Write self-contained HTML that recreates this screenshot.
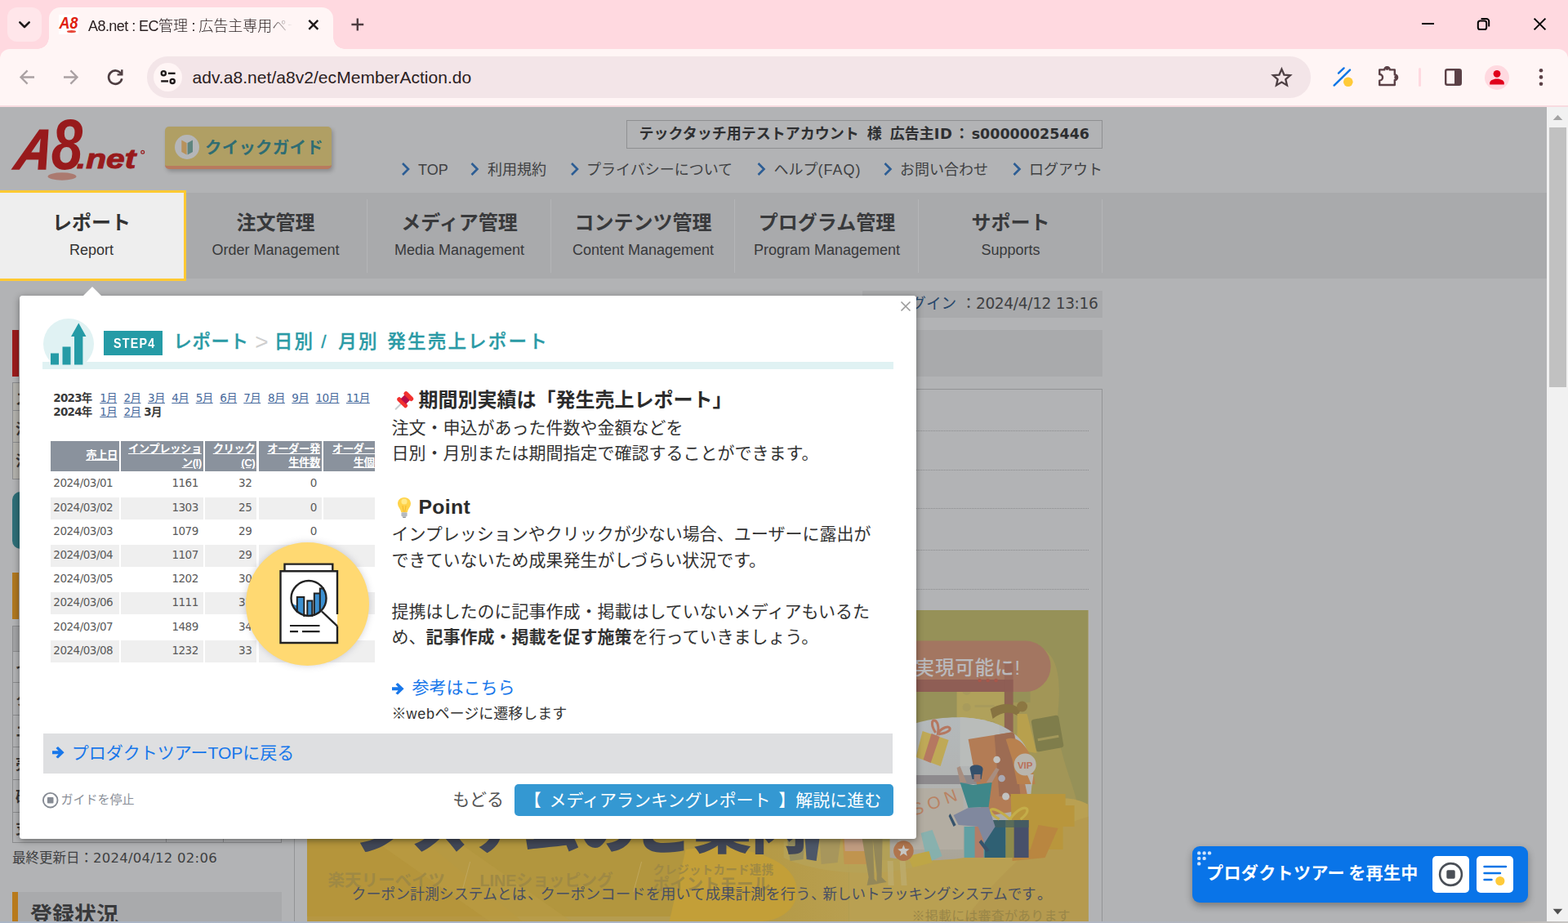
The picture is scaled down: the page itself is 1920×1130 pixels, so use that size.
<!DOCTYPE html>
<html lang="ja">
<head>
<meta charset="utf-8">
<title>A8.net : EC管理 : 広告主専用ページ</title>
<style>
*{box-sizing:border-box;margin:0;padding:0}
html,body{width:1920px;height:1130px;overflow:hidden;background:#b2b3b5}
body{position:relative;font-family:"Liberation Sans","Noto Sans CJK JP",sans-serif;color:#333;-webkit-font-smoothing:antialiased}
.abs{position:absolute}
.jp{font-family:"Liberation Sans","Noto Sans CJK JP",sans-serif}
/* ---------- browser chrome ---------- */
#chrome{position:absolute;left:0;top:0;width:1920px;height:131px;background:#ffd9e0;overflow:hidden;z-index:100}
#tabsearch{position:absolute;left:9px;top:9px;width:42px;height:42px;border-radius:12px;background:#ffe6ea}
#tab{position:absolute;left:60px;top:9px;width:348px;height:52px;border-radius:14px 14px 0 0;background:#fff5f5}
#tab:before,#tab:after{content:"";position:absolute;bottom:1px;width:14px;height:14px;background:radial-gradient(circle at 0 0,rgba(255,245,245,0) 13.5px,#fff5f5 14px)}
#tab:before{left:-14px}
#tab:after{right:-14px;background:radial-gradient(circle at 100% 0,rgba(255,245,245,0) 13.5px,#fff5f5 14px)}
#tabtitle{position:absolute;left:108px;top:19px;width:250px;height:26px;font-size:18px;line-height:26px;color:#2a2021;font-weight:300;letter-spacing:0;white-space:nowrap;overflow:hidden;font-family:"Liberation Sans","Noto Sans CJK JP",sans-serif;-webkit-mask-image:linear-gradient(90deg,#000 220px,transparent 250px);mask-image:linear-gradient(90deg,#000 220px,transparent 250px)}
#toolbar{position:absolute;left:0;top:60px;width:1920px;height:69px;background:#fff5f5;border-radius:12px 12px 0 0}
#omni{position:absolute;left:180px;top:9px;width:1425px;height:50.5px;border-radius:25.25px;background:#f3e5e8}
#sitebtn{position:absolute;left:8px;top:8px;width:35px;height:35px;border-radius:18px;background:#fff5f5}
#url{position:absolute;left:55.5px;top:10.8px;font-size:21px;line-height:30px;color:#2a2021;white-space:nowrap;font-family:"Liberation Sans",sans-serif;letter-spacing:.04px}
#chromeline{position:absolute;left:0;top:129px;width:1920px;height:2px;background:#f8dbe0}
/* ---------- page ---------- */
#page{position:absolute;left:0;top:130px;width:1895px;height:1000px;background:#b2b3b5;overflow:hidden}
#sb{position:absolute;left:1894px;top:130px;width:26px;height:1000px;background:#f1f1f1}
#sbthumb{position:absolute;left:3.4px;top:26px;width:20.2px;height:317.5px;background:#c1c1c1}

/* ---------- page header ---------- */
.dim{color:#3c3d3f}
#logo{position:absolute;left:0;top:0}
#qg{position:absolute;left:202px;top:24.5px;width:204px;height:52.5px;border-radius:5px;background:#b09f64;border-bottom:4px solid #b87a5e;box-shadow:2px 3px 5px rgba(0,0,0,.22)}
#qg .ic{position:absolute;left:12px;top:10px;width:30px;height:30px;border-radius:50%;background:#b5b6b8}
#qg .tx{position:absolute;left:49px;top:11.6px;font-family:"Liberation Sans","Noto Sans CJK JP",sans-serif;font-weight:bold;font-size:20.5px;line-height:30px;color:#2f6d73;white-space:nowrap;letter-spacing:.2px}
#acct{position:absolute;left:767px;top:17px;width:583px;height:35px;border:1px solid #8f9092;white-space:nowrap;font-weight:bold;font-size:18px;line-height:31.6px;color:#2e2f31;padding-left:14.5px;font-family:"DejaVu Sans","Noto Sans CJK JP",sans-serif}
#acct .j{font-family:"Liberation Sans","Noto Sans CJK JP",sans-serif}
.hl{position:absolute;top:63.6px;font-size:18px;line-height:28px;color:#404143;white-space:nowrap;font-family:"Liberation Sans","Noto Sans CJK JP",sans-serif}
/* nav */
#nav{position:absolute;left:0;top:106px;width:1895px;height:105px;background:#a9aaac}
.ni{position:absolute;top:0;width:225px;height:105px;text-align:center;color:#38393b}
.ni b{display:block;position:absolute;left:0;right:0;top:18.6px;font-size:24px;line-height:36px;font-family:"Liberation Sans","Noto Sans CJK JP",sans-serif;font-weight:bold;white-space:nowrap}
.ni span{display:block;position:absolute;left:-20px;right:-20px;top:57px;font-size:18px;line-height:26px;white-space:nowrap;font-family:"Liberation Sans",sans-serif}
.ni i{position:absolute;right:0;top:8px;width:1px;height:90px;background:#b4b5b7}
#nav0{position:absolute;left:-3px;top:103px;width:231px;height:111px;border:3px solid #ffc933;background:#eee;z-index:5}
#nav0 .ni{left:-.5px;top:0;color:#333}

/* ---------- modal ---------- */
#modal{position:absolute;left:24.3px;top:232px;width:1097.6px;height:664.8px;border-left:1px solid #fff;background:#fff;border-radius:3.5px;box-shadow:0 2px 9px rgba(0,0,0,.42);z-index:20}
#marrow{position:absolute;left:77px;top:-11px;width:0;height:0;border-left:11px solid transparent;border-right:11px solid transparent;border-bottom:11px solid #fff}
#mclose{position:absolute;left:1076.4px;top:6px}
#mcircle{position:absolute;left:28px;top:28px;width:62px;height:62px;border-radius:50%;background:#e0f2f3}
#mbar{position:absolute;left:27px;top:81px;width:1042px;height:9px;background:#e0f2f3}
#step{position:absolute;left:102px;top:43px;width:72px;height:29.5px;background:#259ba6;color:#fff;font-family:"Liberation Sans",sans-serif;font-weight:bold;font-size:17px;line-height:32.5px;text-align:center;white-space:nowrap}
#step span{display:inline-block;transform:scaleX(.84);letter-spacing:1.5px;margin-left:2px}
#mtitle{position:absolute;left:189px;top:37.3px;font-family:"Liberation Sans","Noto Sans CJK JP",sans-serif;font-weight:500;font-size:22.5px;line-height:40px;color:#2a9aa5;white-space:nowrap;letter-spacing:2.2px;-webkit-text-stroke:.35px #2a9aa5}
#mtitle span{position:absolute;top:0}
#mtitle .gt{color:#cfcfcf;-webkit-text-stroke:0;font-family:"Liberation Sans",sans-serif;font-size:28px;letter-spacing:0;font-weight:normal;top:0}
#mtext{position:absolute;left:454.2px;top:109.7px;width:620px;font-family:"Liberation Sans","Noto Sans CJK JP",sans-serif;font-size:21px;line-height:31.5px;color:#333;white-space:nowrap}
#mtext h3{font-size:24px;line-height:36px;font-weight:bold;color:#2b2b2b;padding-left:33px;position:relative;top:.6px}
#mtext h3 svg{position:absolute;left:0;top:-.6px}
#mtext p{height:31.5px}
#mtext .lk{color:#1877ea;position:relative;top:-.8px}
#mtext .nt{font-size:18px;line-height:27px;height:27px;color:#333;position:relative;top:2.2px}
#mback{position:absolute;left:28px;top:536px;width:1040px;height:49px;background:#dedfe1;color:#1877ea;font-family:"Liberation Sans","Noto Sans CJK JP",sans-serif;font-size:21px;line-height:47.8px;padding-left:34.5px;white-space:nowrap}
#mstop{position:absolute;left:49.2px;top:605.3px;font-family:"Liberation Sans","Noto Sans CJK JP",sans-serif;font-size:15px;line-height:24px;color:#898e97;white-space:nowrap}
#mprev{position:absolute;left:529px;top:599.9px;font-family:"Liberation Sans","Noto Sans CJK JP",sans-serif;font-size:21px;line-height:34px;color:#555;white-space:nowrap}
#mnext{position:absolute;left:605px;top:598px;width:464px;height:39px;border-radius:5px;background:#3498d2;color:#fff;font-family:"Liberation Sans","Noto Sans CJK JP",sans-serif;font-size:21px;line-height:39.8px;text-align:center;white-space:nowrap;word-spacing:4px;padding-right:3.5px}

/* mini screenshot */
#mimg{position:absolute;left:37px;top:112px;width:397px;height:350px;overflow:hidden;font-family:"Liberation Sans","Noto Sans CJK JP",sans-serif;font-size:13px;color:#555}
#mimg .yr{position:absolute;left:3px;font-weight:bold;color:#3a3a3a;font-size:13.5px;line-height:17px;white-space:nowrap;font-family:"DejaVu Sans","Noto Sans CJK JP",sans-serif;letter-spacing:-.75px}
#mimg .mo{position:absolute;font-size:13.5px;line-height:17px;color:#46699c;text-decoration:underline;white-space:nowrap;font-family:"DejaVu Sans","Noto Sans CJK JP",sans-serif;letter-spacing:-.6px}
#mimg .th{position:absolute;top:65.5px;height:37px;background:#8a929d;color:#fff;font-weight:bold;font-size:13.4px;line-height:17.5px;text-align:right;padding:1.2px 2px 0 0;white-space:nowrap;text-decoration:underline;overflow:hidden;font-family:"Liberation Sans","Noto Sans CJK JP",sans-serif;letter-spacing:-.5px}
#mimg .rw{position:absolute;left:0;width:397px;height:27px}
#mimg .c{position:absolute;top:0;height:27px;line-height:25.4px;font-size:13.5px;color:#5a5a5a;text-align:right;padding-right:6px;white-space:nowrap;font-family:"DejaVu Sans",sans-serif;letter-spacing:-.5px}
#mimg .g .c{background:#efefef}
#mimg .c1{left:0;width:83.5px;text-align:left;padding-left:3px}
#mimg .c2{left:85.5px;width:101px}
#mimg .c3{left:189px;width:63px}
#mimg .c4{left:254.5px;width:77px}
#mimg .c5{left:334px;width:63px}
#ycirc{position:absolute;left:239px;top:190px;width:151px;height:151px;border-radius:50%;background:#ffd972;box-shadow:0 0 9px rgba(90,90,110,.28)}

/* ---------- dimmed page content ---------- */
.bd{position:absolute;background:#8b8c8e}
#lastlogin{position:absolute;left:1056px;top:226px;width:294px;height:32.5px;background:#a9aaac;font-size:18.6px;line-height:32px;color:#3f4042;white-space:nowrap;text-align:right;padding-right:5.5px;font-family:"DejaVu Sans","Noto Sans CJK JP",sans-serif;letter-spacing:-.35px}
#lastlogin .b{color:#27476b;font-family:"Liberation Sans","Noto Sans CJK JP",sans-serif;letter-spacing:0}
#hbar{position:absolute;left:377px;top:274px;width:973px;height:56.5px;background:#a9aaac}
#mbox{position:absolute;left:360px;top:346px;width:990px;height:700px;border:1px solid #939496}
.dot{position:absolute;left:377px;width:956px;height:0;border-top:1px dotted #8a8b8d}
#upd{position:absolute;left:15px;top:906px;font-size:16.5px;line-height:28px;color:#3e3f41;white-space:nowrap;font-family:"DejaVu Sans","Noto Sans CJK JP",sans-serif;letter-spacing:0}
#upd .j{font-family:"Liberation Sans","Noto Sans CJK JP",sans-serif;letter-spacing:0}
.sl{position:absolute;left:19px;margin-top:1.6px;font-family:"Liberation Sans","Noto Sans CJK JP",sans-serif;font-weight:bold;font-size:18px;line-height:26px;color:#3a3b3d;white-space:nowrap}
#reg{position:absolute;left:15px;top:962px;width:330px;height:60px;background:#a9aaac;border-left:7px solid #b87a1c;font-family:"Liberation Sans","Noto Sans CJK JP",sans-serif;font-weight:bold;font-size:27px;line-height:58.4px;color:#38393b;padding-left:15px;white-space:nowrap}
#bstrip{position:fixed;left:0;top:1128px;width:1920px;height:2px;background:linear-gradient(90deg,#a9b4c5 0,#b0b6c2 70%,#b5b2b0 96%,#c8c6c4 100%);z-index:200}
/* ---------- techtouch widget ---------- */
#tt{position:absolute;left:1460px;top:906px;width:411px;height:69px;border-radius:9px;background:#0974e8;box-shadow:0 4px 10px rgba(0,0,0,.32);z-index:30}
#tt .t{position:absolute;left:17px;top:17.2px;word-spacing:-2px;letter-spacing:.4px;font-family:"Liberation Sans","Noto Sans CJK JP",sans-serif;font-weight:bold;font-size:21px;line-height:32px;color:#fff;white-space:nowrap}
#tt .bt{position:absolute;top:12px;width:45px;height:45px;border-radius:5px;background:#fff}
</style>
</head>
<body>
<div id="chrome">
  <div id="tabsearch"></div>
  <div id="tab"></div>
  <div id="tabtitle"><span style="letter-spacing:-.55px">A8.net : EC</span>管理<span style="letter-spacing:-.6px"> : </span>広告主専用ページ</div>
  <div id="toolbar">
    <div id="omni"><div id="sitebtn"></div><div id="url">adv.a8.net/a8v2/ecMemberAction.do</div></div>
  </div>
  <div id="chromeline"></div>
  <svg id="chromeicons" class="abs" style="left:0;top:0" width="1920" height="130" viewBox="0 0 1920 130" fill="none">
    <!-- tab search chevron -->
    <path d="M24.3 27.3 L30 33 L35.7 27.3" stroke="#1f1a1b" stroke-width="2.6" stroke-linecap="round" stroke-linejoin="round"/>
    <!-- favicon -->
    <rect x="72" y="18" width="24" height="24" fill="#fff"/>
    <!-- tab close -->
    <path d="M378.3 24.9 L389.3 35.9 M389.3 24.9 L378.3 35.9" stroke="#1f1a1b" stroke-width="2.4" stroke-linecap="butt"/>
    <!-- new tab -->
    <path d="M437.8 22.6 V37.4 M430.4 30 H445.2" stroke="#4e3d41" stroke-width="2.4"/>
    <!-- window controls -->
    <path d="M1741 29 H1756" stroke="#000" stroke-width="2"/>
    <rect x="1809.8" y="25.6" width="10.4" height="10.4" rx="2.6" stroke="#000" stroke-width="2"/>
    <path d="M1813.6 22.9 H1820 A3.2 3.2 0 0 1 1823.2 26.1 V32.6" stroke="#000" stroke-width="2"/>
    <path d="M1878.6 22.6 L1892.4 36.4 M1892.4 22.6 L1878.6 36.4" stroke="#000" stroke-width="2"/>
    <!-- back / forward -->
    <path d="M42 94.5 H26 M33.6 86.4 L25.5 94.5 L33.6 102.6" stroke="#aaa1a3" stroke-width="2.3" stroke-linejoin="miter"/>
    <path d="M78 94.5 H94 M86.4 86.4 L94.5 94.5 L86.4 102.6" stroke="#aaa1a3" stroke-width="2.3" stroke-linejoin="miter"/>
    <!-- reload -->
    <path d="M149.3 96.3 A8.2 8.2 0 1 1 148.3 90.4" stroke="#4e3d41" stroke-width="2.6"/>
    <path d="M143.6 91.4 H149.3 V85.2" stroke="#4e3d41" stroke-width="2.4" fill="none"/>
    <!-- tune icon -->
    <circle cx="200.3" cy="89.8" r="2.6" stroke="#1f1a1b" stroke-width="2.3"/>
    <path d="M206 89.8 H214.6" stroke="#1f1a1b" stroke-width="2.4"/>
    <circle cx="211.2" cy="99.4" r="2.6" stroke="#1f1a1b" stroke-width="2.3"/>
    <path d="M197.2 99.4 H206" stroke="#1f1a1b" stroke-width="2.4"/>
    <!-- star -->
    <path transform="translate(1569.4 94.8) scale(.93) translate(-1569 -94.5)" d="M1569 83.6 L1572.2 91 L1580.3 91.7 L1574.2 97 L1576 104.9 L1569 100.7 L1562 104.9 L1563.8 97 L1557.7 91.7 L1565.8 91 Z" stroke="#4e4044" stroke-width="2.5" stroke-linejoin="miter"/>
    <!-- techtouch ext icon -->
    <path d="M1633.6 104.6 L1653 85.6 M1639 89.6 L1645.6 83.4" stroke="#0b74e6" stroke-width="2.4" stroke-linecap="round"/>
    <circle cx="1650.8" cy="100.3" r="5.8" fill="#ffca38"/>
    <!-- puzzle -->
    <path d="M1689.2 85.4 H1695.2 A3.3 3.3 0 0 1 1701.8 85.4 H1707.8 V91.4 A3.3 3.3 0 0 1 1707.8 98 V104 H1689.2 V98.6 A3.3 3.3 0 0 0 1689.2 91 Z" stroke="#5b4046" stroke-width="2.4" stroke-linejoin="round"/>
    <circle cx="1698.5" cy="83.6" r="2.4" fill="#5b4046"/>
    <circle cx="1709.6" cy="94.7" r="2.4" fill="#5b4046"/>
    <!-- separator -->
    <rect x="1737" y="83" width="3" height="23" rx="1.5" fill="#ffd9e0"/>
    <!-- side panel -->
    <rect x="1770.2" y="85.2" width="18.6" height="18.6" rx="2" stroke="#5b4046" stroke-width="2.4"/>
    <rect x="1781" y="85" width="8" height="19" fill="#5b4046"/>
    <!-- profile -->
    <circle cx="1833" cy="95" r="15" fill="#ffd9e0"/>
    <circle cx="1833" cy="90.3" r="4.4" fill="#e0001b"/>
    <path d="M1824.2 103.6 V101.6 C1824.2 98 1829.8 96.6 1833 96.6 C1836.2 96.6 1841.8 98 1841.8 101.6 V103.6 Z" fill="#e0001b"/>
    <!-- menu dots -->
    <circle cx="1887" cy="86.2" r="2.3" fill="#5b4046"/>
    <circle cx="1887" cy="94.4" r="2.3" fill="#5b4046"/>
    <circle cx="1887" cy="102.7" r="2.3" fill="#5b4046"/>
    <text x="72.5" y="35" font-family="Liberation Sans, sans-serif" font-size="20.5" font-weight="bold" font-style="italic" fill="#e0200f" textLength="23" lengthAdjust="spacingAndGlyphs">A8</text>
    <ellipse cx="87.5" cy="38.6" rx="5.6" ry="1.6" fill="#e8493a"/>
  </svg>

</div>

<div id="page">
  <svg id="logo" width="200" height="100" viewBox="0 0 200 100">
    <ellipse cx="76" cy="86" rx="17.5" ry="4.7" fill="#ab7a70"/>
    <g font-family="Liberation Sans, sans-serif" font-weight="bold" font-style="italic" fill="#981a1c">
      <text transform="translate(16,76.5) skewX(-12) scale(0.88,1)" font-size="69.5" stroke="#981a1c" stroke-width="1.5">A</text>
      <text transform="translate(62.7,76.5) scale(0.79,1)" font-size="87.5">8</text>
      <text transform="translate(93.8,75.5) scale(1.2,1)" font-size="34" stroke="#981a1c" stroke-width="1">.net</text>
    </g>
    <circle cx="174.7" cy="56.3" r="1.9" fill="none" stroke="#981a1c" stroke-width="1.2"/>
  </svg>
  <div id="qg"><div class="ic"><svg width="30" height="30" viewBox="0 0 30 30"><path d="M8.3 6.6 L14.6 10 V24.6 L8.3 21 Z" fill="#b8925c"/><path d="M22 6.6 L15.6 10 V24.6 L22 21 Z" fill="#5f857f"/></svg></div><div class="tx">クイックガイド</div></div>
  <div id="acct"><span class="j">テックタッチ用テストアカウント&nbsp;&nbsp;様</span><span class="j" style="margin-left:10px">広告主</span><span style="letter-spacing:.6px">ID</span><span class="j" style="margin-left:2px">：</span><span style="font-size:17.5px;letter-spacing:0;margin-left:3px">s00000025446</span></div>
  <svg class="abs" style="left:480px;top:60px" width="800" height="34" viewBox="480 60 800 34" fill="none" stroke="#2c5d94" stroke-width="2.6">
    <path d="M493 70 L500 77 L493 84"/><path d="M577.5 70 L584.5 77 L577.5 84"/><path d="M700 70 L707 77 L700 84"/>
    <path d="M928.5 70 L935.5 77 L928.5 84"/><path d="M1083.5 70 L1090.5 77 L1083.5 84"/><path d="M1241.5 70 L1248.5 77 L1241.5 84"/>
  </svg>
  <div class="hl" style="left:512px">TOP</div>
  <div class="hl" style="left:597px">利用規約</div>
  <div class="hl" style="left:718px">プライバシーについて</div>
  <div class="hl" style="left:947.5px">ヘルプ<span style="letter-spacing:1px">(FAQ)</span></div>
  <div class="hl" style="left:1102px">お問い合わせ</div>
  <div class="hl" style="left:1260px">ログアウト</div>
  <div id="nav">
    <div class="ni" style="left:225px"><b>注文管理</b><span>Order Management</span><i></i></div>
    <div class="ni" style="left:450px"><b>メディア管理</b><span>Media Management</span><i></i></div>
    <div class="ni" style="left:675px"><b>コンテンツ管理</b><span>Content Management</span><i></i></div>
    <div class="ni" style="left:900px"><b>プログラム管理</b><span>Program Management</span><i></i></div>
    <div class="ni" style="left:1125px"><b>サポート</b><span>Supports</span><i></i></div>
  </div>


  <!-- left sidebar slivers -->
  <div class="abs" style="left:15px;top:274px;width:8px;height:57px;background:#9b1c1c"></div>
  <div class="abs" style="left:15px;top:338px;width:330px;height:119px;background:#b3b2ad;border:1px solid #8b8c8e"></div>
  <div class="bd" style="left:15px;top:372px;width:330px;height:1px"></div>
  <div class="bd" style="left:15px;top:411px;width:330px;height:1px"></div>
  <div class="abs" style="left:15px;top:472px;width:330px;height:70px;border-radius:10px;background:#2e6f78"></div>
  <div class="abs" style="left:15px;top:571px;width:8px;height:57px;background:#b07820"></div>
  <div class="abs" style="left:15px;top:636px;width:330px;height:266px;border:1px solid #8b8c8e"></div>
  <div class="abs" style="left:16px;top:637px;width:328px;height:30px;background:#a3a4a6"></div>
  <div class="bd" style="left:15px;top:667px;width:330px;height:1px"></div>
  <div class="bd" style="left:15px;top:705px;width:330px;height:1px"></div>
  <div class="bd" style="left:15px;top:745px;width:330px;height:1px"></div>
  <div class="bd" style="left:15px;top:784px;width:330px;height:1px"></div>
  <div class="bd" style="left:15px;top:824px;width:330px;height:1px"></div>
  <div class="bd" style="left:15px;top:864px;width:330px;height:1px"></div>
  <div class="bd" style="left:203px;top:636px;width:1px;height:266px"></div>
  <div class="bd" style="left:273px;top:636px;width:1px;height:266px"></div>
  <div class="sl" style="top:344px">スタンダード</div>
  <div class="sl" style="top:381.5px">注文管理</div>
  <div class="sl" style="top:420.5px">注文状況</div>
  <div class="sl" style="top:673px">インプレッション</div>
  <div class="sl" style="top:712px">クリック</div>
  <div class="sl" style="top:751px">ニュース</div>
  <div class="sl" style="top:791px">売上件数</div>
  <div class="sl" style="top:831px">確定件数</div>
  <div class="sl" style="top:870px">支払金額</div>
  <div id="upd"><span class="j">最終更新日：</span><span style="letter-spacing:.25px">2024/04/12 02:06</span></div>
  <div id="reg">登録状況</div>
  <!-- main column -->
  <div id="lastlogin"><span class="b">最終ログイン</span> ：2024/4/12 13:16</div>
  <div id="hbar"></div>
  <div id="mbox"></div>
  <div class="dot" style="top:397px"></div>
  <div class="dot" style="top:445px"></div>
  <div class="dot" style="top:492px"></div>
  <div class="dot" style="top:543px"></div>
  <div class="dot" style="top:591px"></div>
  <svg id="banner" class="abs" style="left:376.4px;top:617px" width="956.6" height="381" viewBox="376.4 747 956.6 381">
    <defs>
      <linearGradient id="blobg" x1="0" y1="0" x2="0" y2="1"><stop offset="0" stop-color="#b4b9bb"/><stop offset=".55" stop-color="#b1b2b0"/><stop offset="1" stop-color="#a9a497"/></linearGradient>
      <linearGradient id="seam" x1="0" y1="0" x2="1" y2="0"><stop offset="0" stop-color="#b2963e"/><stop offset="1" stop-color="#b9a052"/></linearGradient>
      <clipPath id="bclip"><rect x="376.4" y="747" width="956.6" height="381"/></clipPath>
      <clipPath id="blobclip"><path d="M1090 900 C1130 872 1225 866 1255 912 C1272 945 1264 998 1240 1030 C1200 1056 1130 1056 1090 1050 Z"/></clipPath>
    </defs>
    <g clip-path="url(#bclip)">
    <rect x="376" y="747" width="957" height="381" fill="#b2963e"/>
    <rect x="376" y="1122" width="957" height="6" fill="#b7a05c" opacity=".6"/>
    <!-- right illustration area -->
    <rect x="1040" y="747" width="293" height="381" fill="#969158"/>
    <rect x="860" y="1000" width="200" height="128" fill="url(#seam)"/>
    <path d="M1262 790 C1296 792 1300 830 1296 870 C1292 915 1312 950 1320 985 L1333 1000 V1128 H1040 V860 H1262 Z" fill="#a29657"/>
    <path d="M1040 1128 V1050 C1120 1062 1200 1040 1250 1000 C1280 975 1310 972 1333 985 V1128 Z" fill="#b9a052"/>
    <path d="M1180 1128 C1230 1060 1290 1010 1333 1000 V1128 Z" fill="#b59a4f"/>
    <path d="M377 1030 L520 1030 L640 1128 L377 1128 Z" fill="#b8953a" opacity=".6"/>
    <path d="M460 1030 L560 1030 L700 1128 L600 1128 Z" fill="#ba9d45" opacity=".55"/>
    <path d="M840 1040 C930 1030 985 1060 975 1100 C970 1118 950 1128 930 1128 L820 1128 Z" fill="#c39f38"/>
    <path d="M960 1030 H1125 V1060 C1080 1075 1000 1070 960 1050 Z" fill="#b7a257" opacity=".8"/>
    <!-- monitor -->
    <rect x="1100" y="839" width="136" height="116" fill="#979159"/>
    <rect x="1172" y="846" width="58" height="100" fill="#b0a15b"/>
    <g fill="#a89b5c"><circle cx="1184" cy="846" r="5"/><circle cx="1184" cy="866" r="5"/><circle cx="1184" cy="886" r="5"/><rect x="1194" y="843" width="24" height="3"/><rect x="1194" y="863" width="24" height="3"/><rect x="1194" y="883" width="24" height="3"/></g>
    <path d="M1095 839 H1235.7 V955" fill="none" stroke="#8e6452" stroke-width="10.6"/><rect x="1095" y="832" width="146" height="3.5" fill="#8e6452"/>
    <!-- pill -->
    <rect x="990" y="784.5" width="297" height="62.5" rx="31.2" fill="#a37661"/>
    <rect x="1100" y="832" width="141" height="15" fill="#8f5e55"/>
    <rect x="1230.4" y="812" width="10.6" height="35" fill="#8f5e55" opacity=".55"/>
    <g fill="#a9574b"><circle cx="1200" cy="833" r="2.2"/><circle cx="1210" cy="833" r="2.2"/><circle cx="1220" cy="833" r="2.2"/></g>
    <text x="1121" y="826.5" font-family="Liberation Sans, Noto Sans CJK JP, sans-serif" font-weight="500" font-size="23.5" fill="#b9b9bc" letter-spacing=".9">実現可能に!</text>
    <!-- woman + card -->
    <rect x="1266" y="878" width="34" height="40" rx="3" fill="#7f7d4b" transform="rotate(-10 1283 898)"/>
    <rect x="1270" y="902" width="26" height="3" fill="#a2975a" transform="rotate(-10 1283 898)"/>
    <path d="M1213 868 C1230 858 1246 862 1250 870 L1246 876 C1236 870 1226 872 1216 880 Z" fill="#877341"/>
    <circle cx="1252" cy="865" r="6.5" fill="#8c7742"/>
    <path d="M1246 874 L1258 874 L1266 906 L1270 922 L1244 918 L1246 896 Z" fill="#b8a04d"/>
    <!-- white blob -->
    <path d="M1090 900 C1130 872 1225 866 1255 912 C1272 945 1264 998 1240 1030 C1200 1056 1130 1056 1090 1050 Z" fill="url(#blobg)"/>
    <g clip-path="url(#blobclip)">
      <rect x="1095" y="949" width="146" height="11" fill="#8d8a8d"/>
      <rect x="1176" y="876" width="48" height="62" fill="#b9bcba"/>
      <path d="M1186 905 L1242 896 L1262 990 L1204 1000 Z" fill="#b37c55"/>
      <path d="M1218 900 L1242 896 L1250 975 L1224 975 Z" fill="#9d6c53"/>
      <path d="M1100 965 H1180 V1040 H1100 Z" fill="#b3ada2"/>
    </g>
    <path d="M1232 905 C1246 900 1256 912 1262 925 L1268 960 L1246 960 L1240 930 Z" fill="#b9814e"/>
    <!-- gift top-left -->
    <path d="M1130 895 L1162 906 L1152 938 L1122 927 Z" fill="#bfa957"/>
    <path d="M1141 898 L1151 902 L1140 934 L1131 930 Z" fill="#b57861"/>
    <path d="M1146 897 C1134 878 1152 876 1149 897 C1162 882 1174 896 1149 899" fill="none" stroke="#b57861" stroke-width="3"/>
    <!-- coupon text -->
    <text x="1120" y="999" font-family="Liberation Sans, sans-serif" font-size="21" fill="#b98263" letter-spacing="6" transform="rotate(-20 1120 999)">SON</text>
    <!-- dots -->
    <circle cx="1221" cy="930" r="4.3" fill="#c2c2c0"/><circle cx="1227" cy="953" r="4.3" fill="#a9a9b4"/><circle cx="1232" cy="975" r="4.5" fill="#c2c2c0"/>
    <!-- VIP -->
    <path d="M1258 948 L1264 962 L1266 948 Z" fill="#b9b5ad"/>
    <circle cx="1255.6" cy="936" r="13.5" fill="#b9b5ad"/>
    <text x="1255.6" y="940.6" text-anchor="middle" font-family="Liberation Sans, sans-serif" font-weight="bold" font-size="11.5" fill="#b9705a">VIP</text>
    <!-- orange boxes right -->
    <path d="M1238 972 H1305 V986 H1316 V1012 H1302 V1040 H1240 Z" fill="#b9963c"/>
    <path d="M1272 1010 L1296 1014 L1280 1050 L1240 1054 L1240 1042 L1262 1040 Z" fill="#b98640"/>
    <!-- gift boxes -->
    <rect x="1181" y="1012" width="40" height="38" fill="#60a0a3"/>
    <rect x="1194" y="1012" width="11" height="38" fill="#b17e68"/>
    <rect x="1206" y="1004" width="26" height="46" fill="#2f6073"/>
    <rect x="1232" y="1004" width="10" height="46" fill="#8d8b4c"/>
    <rect x="1242" y="1004" width="18" height="46" fill="#47506a"/>
    <rect x="1206" y="1004" width="54" height="9" fill="#44605f" opacity=".7"/>
    <path d="M1237 1003 C1214 982 1204 992 1224 1003 M1237 1003 C1254 980 1268 990 1250 1003" fill="none" stroke="#c4ad49" stroke-width="3.2"/>
    <!-- person -->
    <path d="M1176 958 L1192 961 L1215 958 L1211 988 L1186 989 Z" fill="#3f8789"/>
    <path d="M1176 958 L1172 940 L1176 938 L1184 958 Z M1215 958 L1224 942 L1220 940 L1208 958 Z" fill="#a88e80"/>
    <path d="M1188 941 C1188 935 1204 935 1204 942 L1202 954 L1191 954 Z" fill="#35506b"/>
    <rect x="1193" y="948" width="8" height="9" fill="#9c7b72"/>
    <path d="M1186 989 L1211 988 L1219 1012 L1206 1032 L1198 1012 L1174 1010 L1168 998 Z" fill="#80889e"/>
    <path d="M1164 996 L1171 1010 L1168 1012 L1162 999 Z M1202 1028 L1212 1041 L1208 1043 L1199 1031 Z" fill="#36536c"/>
    <!-- star badge + bags -->
    <path d="M1128 1020 L1142 1016 L1154 1048 L1136 1056 Z" fill="#80b2b0" opacity=".85"/>
    <path d="M1112 1048 L1138 1042 L1142 1056 L1118 1062 Z" fill="#bea646"/>
    <circle cx="1106.8" cy="1041.6" r="12.3" fill="#b0754d"/>
    <path d="M1106.8 1034.2 L1108.7 1039.1 L1114.0 1039.5 L1109.9 1042.8 L1111.3 1047.9 L1106.8 1045.1 L1102.3 1047.9 L1103.7 1042.8 L1099.6 1039.5 L1104.9 1039.1 Z" fill="#c6c6c3"/>
    <!-- left people legs -->
    <path d="M1032 1026 H1062 V1058 H1034 Z" fill="#c0944f"/>
    <path d="M1034 1026 H1060 V1042 H1035 Z" fill="#bf9d8c" opacity=".8"/>
    <path d="M1056 1026 H1069 L1071 1076 L1076 1082 L1062 1084 L1064 1074 Z M1069 1026 H1081 L1080 1074 L1086 1080 L1074 1082 L1074 1070 Z" fill="#938759"/>
    <path d="M1087 1054 H1094 L1095 1084 H1088 Z M1102 1054 H1109 L1111 1084 H1104 Z" fill="#bfb07a" opacity=".55"/>
    <path d="M964 1026 L986 1026 L984 1052 L968 1054 Z" fill="#8f8a62" opacity=".8"/>
    <path d="M986 1026 H1004 L1000 1054 L988 1052 Z" fill="#3b4a6c" opacity=".85"/>
    <path d="M1004 1026 H1030 L1026 1056 L1006 1058 Z" fill="#a3945e" opacity=".8"/>
    <!-- heading -->
    <text x="989" y="1039.5" text-anchor="end" font-family="Liberation Sans, Noto Sans CJK JP, sans-serif" font-weight="900" font-size="70.5" fill="#414757" letter-spacing="-.8">システムのご案内</text>
    <!-- faded row -->
    <g font-family="Liberation Sans, Noto Sans CJK JP, sans-serif" font-weight="bold" fill="#9f8944">
      <text x="402" y="1085.5" font-size="20.5">楽天リーベイツ</text>
      <text x="588" y="1085.5" font-size="20.5" textLength="163" lengthAdjust="spacingAndGlyphs">LINEショッピング</text>
      <text x="800" y="1070" font-size="14.5" letter-spacing=".3">クレジットカード連携</text>
      <text x="800" y="1090" font-size="20.5">ポイントモール</text>
    </g>
    <path d="M576 1055 L566 1092 M786 1055 L776 1092" stroke="#c0a75c" stroke-width="1"/>
    <g font-family="Liberation Sans, Noto Sans CJK JP, sans-serif" font-size="18" fill="#484f63">
      <text x="431" y="1101.5" textLength="214" lengthAdjust="spacingAndGlyphs">クーポン計測システムとは</text><text x="646.5" y="1101.5">、</text>
      <text x="662" y="1101.5" textLength="331" lengthAdjust="spacingAndGlyphs">クーポンコードを用いて成果計測を行う</text><text x="993.5" y="1101.5">、</text>
      <text x="1008" y="1101.5" textLength="261" lengthAdjust="spacingAndGlyphs">新しいトラッキングシステムです</text><text x="1270.5" y="1101.5">。</text>
    </g>
    <text x="1117" y="1127" font-family="Liberation Sans, Noto Sans CJK JP, sans-serif" font-size="16" fill="#998648" letter-spacing=".2">※掲載には審査があります</text>
    </g>
  </svg>
  <div id="modal">
    <div id="marrow"></div>
    <svg id="mclose" width="14" height="14" viewBox="0 0 14 14"><path d="M1.5 1.5 L12.5 12.5 M12.5 1.5 L1.5 12.5" stroke="#9a9a9a" stroke-width="1.6" fill="none"/></svg>
    <div id="mcircle"></div>
    <div id="mbar"></div>
    <svg class="abs" style="left:30px;top:30px" width="60" height="60" viewBox="0 0 60 60"><path d="M7 40.5 H17 V54.5 H7 Z M21.5 32.5 H31.5 V54.5 H21.5 Z M36 20 H32 L41.3 3.5 L50.5 20 H46.4 V54.5 H36 Z" fill="#259ba6"/></svg>
    <div id="step"><span>STEP4</span></div>
    <div id="mtitle"><span style="left:-2px;letter-spacing:.6px">レポート</span><span class="gt" style="left:98px">&gt;</span><span style="left:121.5px">日別</span><span style="left:179px">/</span><span style="left:200px">月別</span><span style="left:260px">発生売上レポート</span></div>
    <div id="mimg"><div class="yr" style="top:4.8px">2023年</div><a class="mo" style="left:60.0px;top:4.8px">1月</a><a class="mo" style="left:89.3px;top:4.8px">2月</a><a class="mo" style="left:118.8px;top:4.8px">3月</a><a class="mo" style="left:148.0px;top:4.8px">4月</a><a class="mo" style="left:177.5px;top:4.8px">5月</a><a class="mo" style="left:207.0px;top:4.8px">6月</a><a class="mo" style="left:236.0px;top:4.8px">7月</a><a class="mo" style="left:265.7px;top:4.8px">8月</a><a class="mo" style="left:295.0px;top:4.8px">9月</a><a class="mo" style="left:324.3px;top:4.8px">10月</a><a class="mo" style="left:361.6px;top:4.8px">11月</a><div class="yr" style="top:21.6px">2024年</div><a class="mo" style="left:60px;top:21.6px">1月</a><a class="mo" style="left:89.3px;top:21.6px">2月</a><div class="yr" style="left:114px;top:21.6px">3月</div><div class="th" style="left:0px;width:83.5px;line-height:34px">売上日</div><div class="th" style="left:85.5px;width:101px">インプレッショ<br>ン(I)</div><div class="th" style="left:189px;width:63px">クリック<br>(C)</div><div class="th" style="left:254.5px;width:77px">オーダー発<br>生件数</div><div class="th" style="left:334px;width:77px">オーダー発<br>生個数</div><div class="rw" style="top:105.3px"><div class="c c1">2024/03/01</div><div class="c c2">1161</div><div class="c c3">32</div><div class="c c4">0</div><div class="c c5"></div></div><div class="rw g" style="top:134.5px"><div class="c c1">2024/03/02</div><div class="c c2">1303</div><div class="c c3">25</div><div class="c c4">0</div><div class="c c5"></div></div><div class="rw" style="top:163.7px"><div class="c c1">2024/03/03</div><div class="c c2">1079</div><div class="c c3">29</div><div class="c c4">0</div><div class="c c5"></div></div><div class="rw g" style="top:192.9px"><div class="c c1">2024/03/04</div><div class="c c2">1107</div><div class="c c3">29</div><div class="c c4">0</div><div class="c c5"></div></div><div class="rw" style="top:222.1px"><div class="c c1">2024/03/05</div><div class="c c2">1202</div><div class="c c3">30</div><div class="c c4">0</div><div class="c c5"></div></div><div class="rw g" style="top:251.3px"><div class="c c1">2024/03/06</div><div class="c c2">1111</div><div class="c c3">31</div><div class="c c4">0</div><div class="c c5"></div></div><div class="rw" style="top:280.5px"><div class="c c1">2024/03/07</div><div class="c c2">1489</div><div class="c c3">34</div><div class="c c4">0</div><div class="c c5"></div></div><div class="rw g" style="top:309.7px"><div class="c c1">2024/03/08</div><div class="c c2">1232</div><div class="c c3">33</div><div class="c c4">0</div><div class="c c5"></div></div><div class="rw" style="top:338.9px"><div class="c c1">2024/03/09</div><div class="c c2">1190</div><div class="c c3">28</div><div class="c c4">0</div><div class="c c5"></div></div><div class="abs" style="left:0;top:340px;width:397px;height:12px;background:#fff"></div><div id="ycirc"></div><svg class="abs" style="left:270px;top:212px" width="90" height="110" viewBox="332 686 90 110" fill="none" stroke="#222" stroke-width="2.4">
<path d="M348.5 699 V690.6 H407.3 V699" fill="#fff"/>
<path d="M343.5 699.3 H413 V787 H343.5 Z" fill="#fff" stroke="none"/>
<circle cx="378" cy="732.5" r="21.5" fill="#fff" stroke="none"/>
<path d="M357.6 739 L363.5 741.5 V731 H372 V752 L376 753.8 V735.5 H382 V753.5 L384.5 753 V726.5 H391.5 V720.5 L397 721.5 C400 728 400.5 738 395 746 C388 755.5 374 757.5 364.5 750 C360.5 746.5 358.5 743 357.6 739 Z" fill="#3b8fd0" stroke="none"/>
<path d="M363.8 750 V731 H372.3 V755 M376.3 755 V735.5 H382.3 V755 M384.8 754 V726.5 H391.8 V748.5 M391.8 726.5 V720.5 H397" stroke-width="2"/>
<circle cx="378" cy="732.5" r="21.5"/>
<path d="M394 748.5 L413 766.5"/>
<path d="M413 752 V699.3 H343.5 V787 H413 V766.5"/>
<path d="M355 766 H391.5 M355 773.2 H365 M370 773.2 H391.5" stroke-width="2.2"/>
</svg></div>
    <div id="mtext">
      <h3><svg width="32" height="36" viewBox="0 0 32 36"><g transform="translate(16.6,17.8) rotate(45)"><rect x="-1" y="5" width="2" height="11.5" rx="1" fill="#c9cdd1"/><rect x="-8" y="1.6" width="16" height="5.2" rx="2.4" fill="#f2312f"/><rect x="-4.6" y="-5" width="9.2" height="7.4" fill="#b90d49"/><rect x="-7.2" y="-9.4" width="14.4" height="5.4" rx="2.4" fill="#f2312f"/></g></svg>期間別実績は「発生売上レポート」</h3>
      <p>注文・申込があった件数や金額などを</p>
      <p>日別・月別または期間指定で確認することができます。</p>
      <p></p>
      <h3><svg width="32" height="36" viewBox="0 0 32 36"><path d="M16 7 C10.5 7 8 11 8 14.6 C8 18.2 10.6 20.4 11.6 23 L12.2 25.2 H19.8 L20.4 23 C21.4 20.4 24 18.2 24 14.6 C24 11 21.5 7 16 7 Z" fill="#ffd34a"/><circle cx="16" cy="12" r="3.6" fill="#ffe98a"/><path d="M14 17 L15.2 24.8 M18 17 L16.8 24.8" stroke="#f5b62e" stroke-width="1" fill="none"/><rect x="12.4" y="25.2" width="7.2" height="5" rx="1.2" fill="#b5b9bf"/><path d="M13.6 30.4 H18.4 L17.5 32 H14.5 Z" fill="#8d9197"/></svg><span style="font-size:24.8px;letter-spacing:.35px">Point</span></h3>
      <p>インプレッションやクリックが少ない場合、ユーザーに露出が</p>
      <p>できていないため成果発生がしづらい状況です。</p>
      <p></p>
      <p>提携はしたのに記事作成・掲載はしていないメディアもいるた</p>
      <p>め、<b>記事作成・掲載を促す施策</b>を行っていきましょう。</p>
      <p></p>
      <p class="lk"><svg width="15" height="15" viewBox="0 0 15 15" style="vertical-align:-1.5px;margin-right:9.5px;margin-left:.5px"><path d="M0 5.3 H7.6 L4.5 1.9 L7 0 L14.6 7.3 L7 14.6 L4.5 12.7 L7.6 9.3 H0 Z" fill="#1877ea"/></svg>参考はこちら</p>
      <p class="nt">※<span style="letter-spacing:.7px">web</span>ページに遷移します</p>
    </div>
    <div id="mback"><svg class="abs" style="left:11px;top:16.3px" width="15" height="15" viewBox="0 0 15 15"><path d="M0 5.3 H7.6 L4.5 1.9 L7 0 L14.6 7.3 L7 14.6 L4.5 12.7 L7.6 9.3 H0 Z" fill="#1877ea"/></svg>プロダクトツアーTOPに戻る</div>
    <svg class="abs" style="left:26px;top:607px" width="21" height="21" viewBox="0 0 21 21"><circle cx="10.7" cy="10.7" r="8.8" fill="none" stroke="#868b94" stroke-width="1.9"/><rect x="6.9" y="6.9" width="7.6" height="7.6" rx="1" fill="#868b94"/></svg>
    <div id="mstop">ガイドを停止</div>
    <div id="mprev">もどる</div>
    <div id="mnext">【 メディアランキングレポート 】解説に進む</div>
  </div>

  <div id="tt">
    <svg class="abs" style="left:5px;top:5px" width="22" height="22" viewBox="0 0 22 22" fill="#cfe3fb"><circle cx="3.2" cy="3.4" r="2.2"/><circle cx="9.6" cy="3.4" r="2.2"/><circle cx="16" cy="3.4" r="2.2"/><circle cx="3.2" cy="9.9" r="2.2"/><circle cx="9.6" cy="9.9" r="2.2"/><circle cx="3.2" cy="16.4" r="2.2"/></svg>
    <div class="t">プロダクトツアー を再生中</div>
    <div class="bt" style="left:294px"><svg width="45" height="45" viewBox="0 0 45 45"><circle cx="22.5" cy="22.5" r="13.4" fill="none" stroke="#4a4f57" stroke-width="2.6"/><rect x="17.3" y="17.3" width="10.4" height="10.4" rx="1.6" fill="#4a4f57"/></svg></div>
    <div class="bt" style="left:348px"><svg width="45" height="45" viewBox="0 0 45 45"><path d="M9.5 13 H36 M9.5 21 H29 M9.5 29 H18.5" stroke="#0b74e6" stroke-width="2.4" stroke-linecap="round" fill="none"/><circle cx="28.8" cy="30.5" r="5.6" fill="#ffca38"/></svg></div>
  </div>
  <div id="bstrip"></div>
  <div id="nav0"><div class="ni"><b>レポート</b><span>Report</span></div></div>
</div>

<div id="sb"><div id="sbthumb"></div>
  <svg class="abs" style="left:0;top:0" width="26" height="1000" viewBox="0 0 26 1000"><path d="M7.7 17 L13.5 10.7 L19.3 17 Z" fill="#a3a3a3"/><path d="M7.6 982.8 L19.2 982.8 L13.4 989.6 Z" fill="#505050"/></svg>
</div>
</body>
</html>
